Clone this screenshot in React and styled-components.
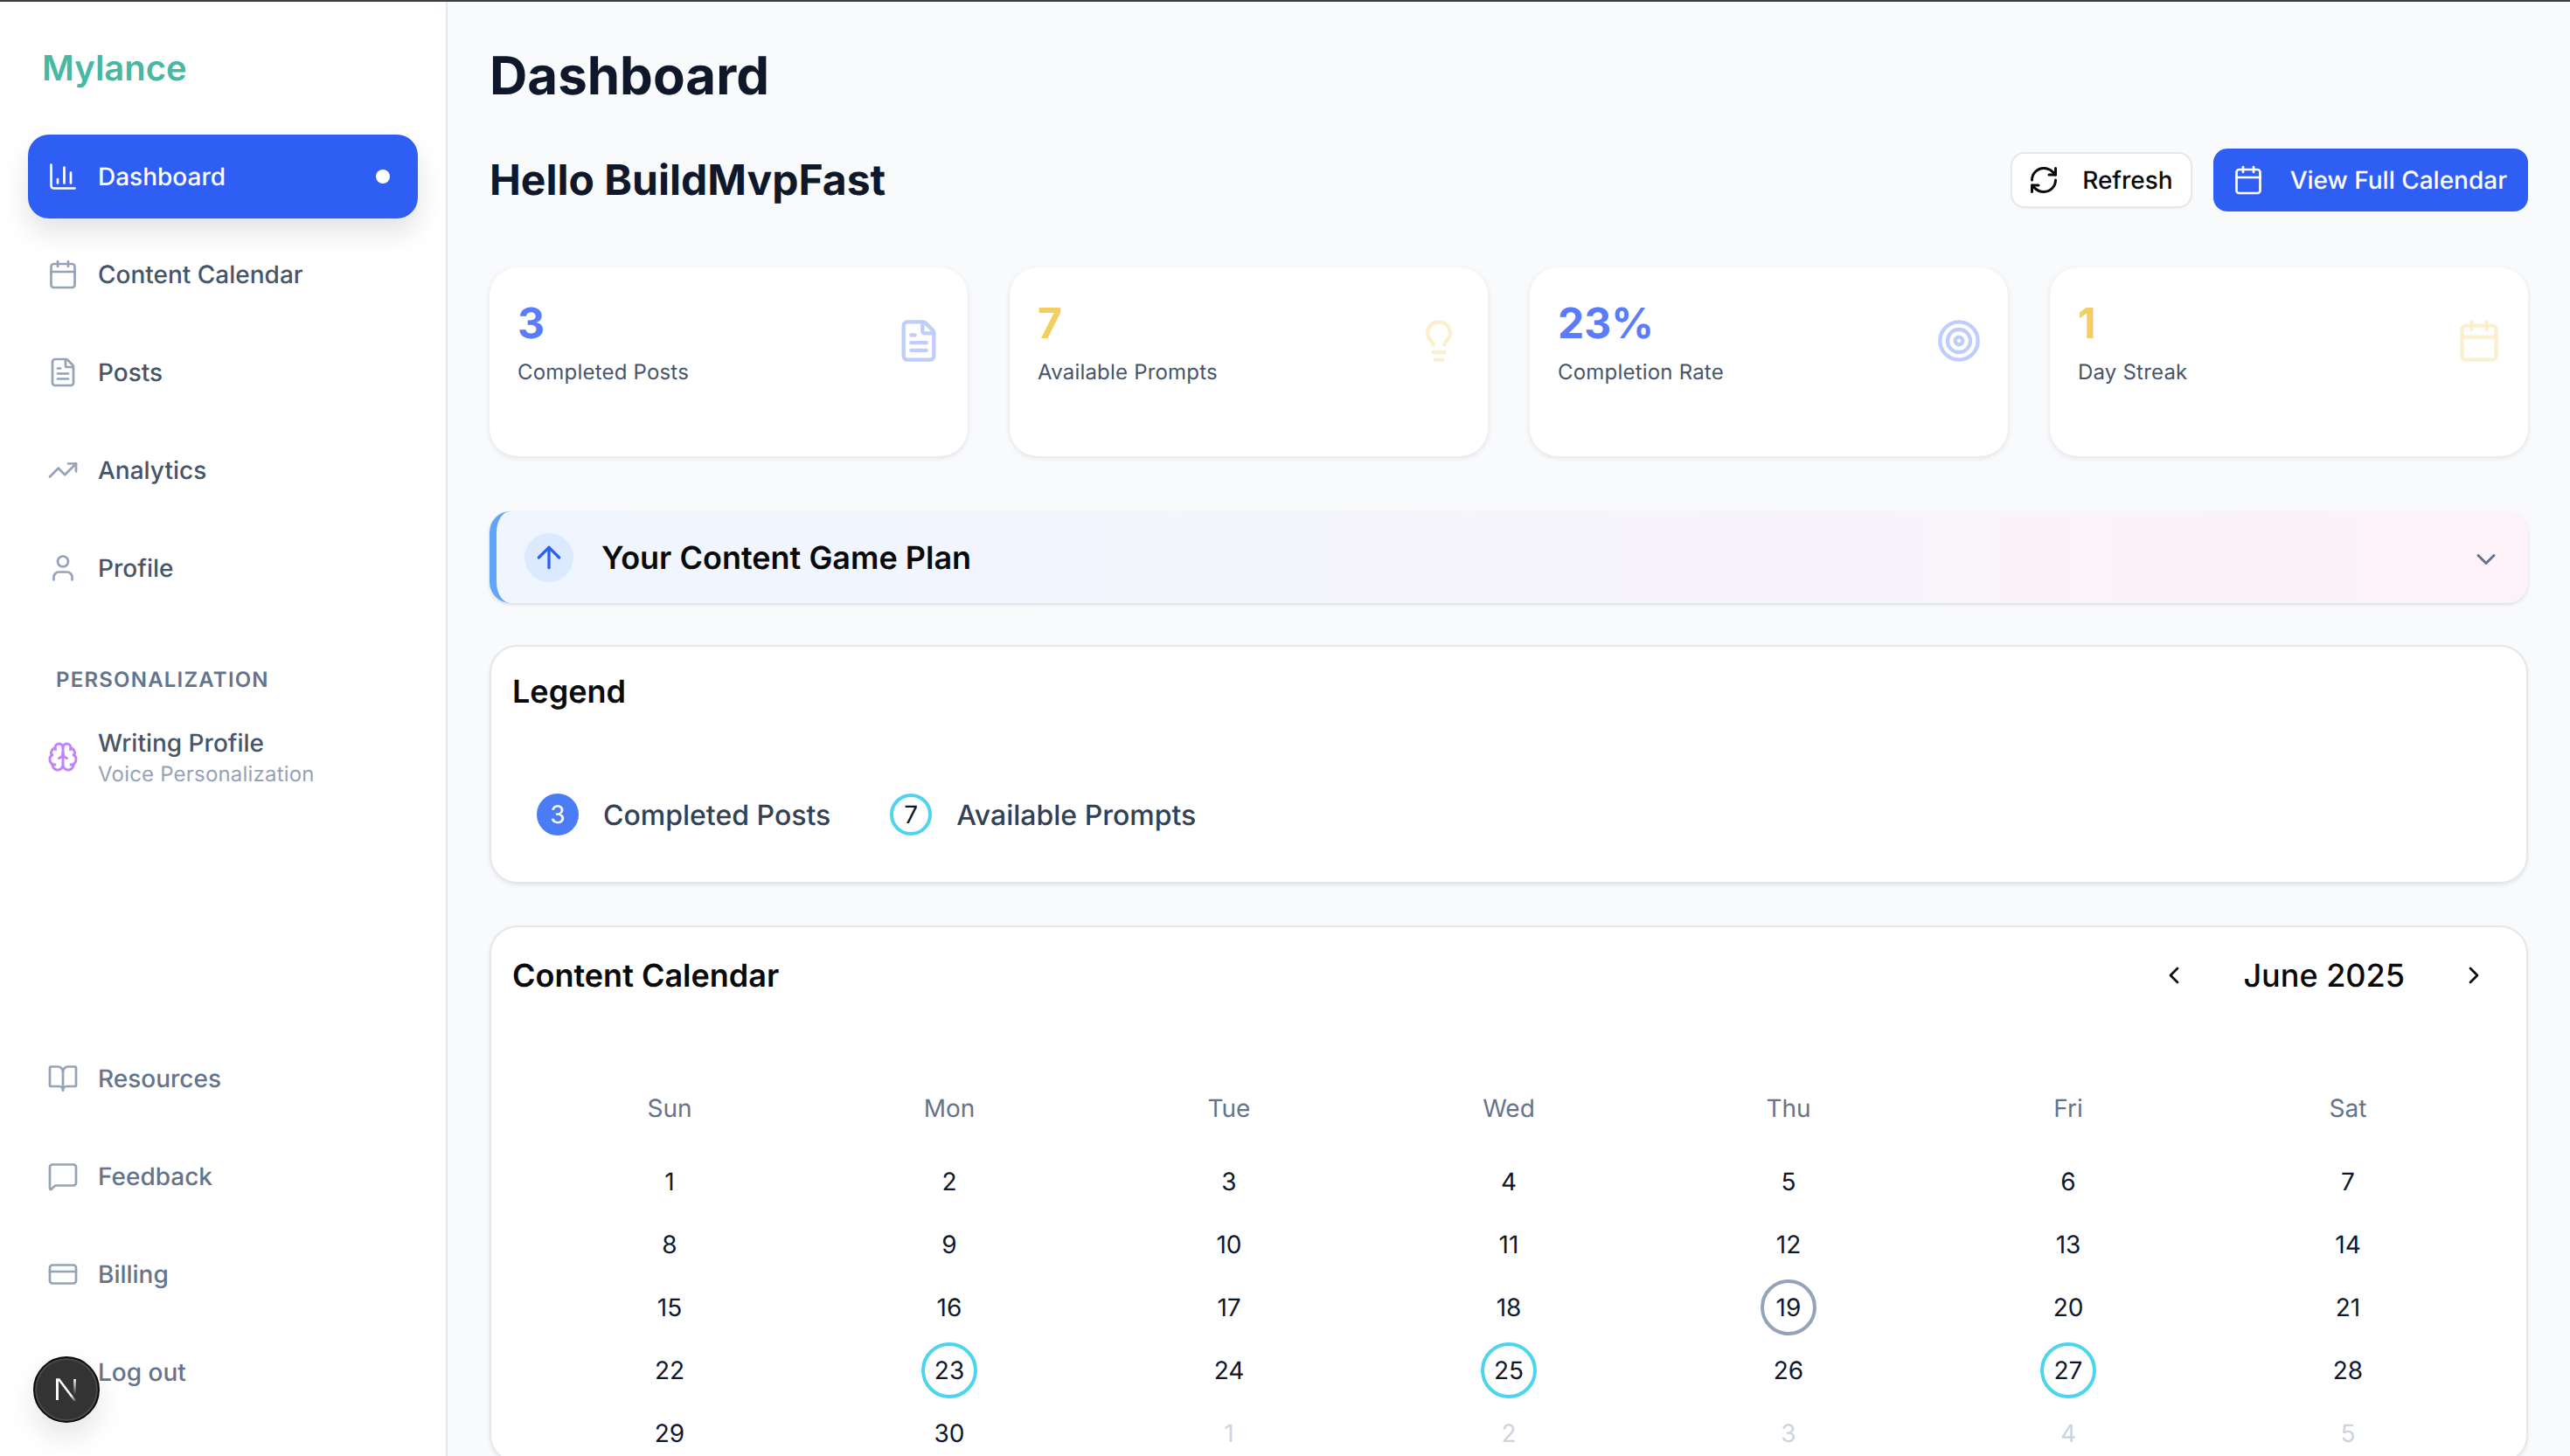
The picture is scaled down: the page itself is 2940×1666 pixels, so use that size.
import React from "react";
import styled, { createGlobalStyle } from "styled-components";
import {
  ArrowUp,
  BookOpen,
  Brain,
  Calendar,
  ChartColumn,
  ChevronDown,
  ChevronLeft,
  ChevronRight,
  CreditCard,
  FileText,
  Lightbulb,
  LogOut,
  MessageSquare,
  RefreshCw,
  Target,
  TrendingUp,
  User,
} from "lucide-react";

const GlobalStyle = createGlobalStyle`
  html, body {
    margin: 0;
    padding: 0;
    height: 100%;
    overflow: hidden;
    background: #f8fafc;
    font-family: Inter, "Liberation Sans", sans-serif;
    text-rendering: geometricPrecision;
  }
  * { box-sizing: border-box; }
`;

const Page = styled.div`
  display: flex;
  width: 100%;
  height: 100vh;
  overflow: hidden;
  border-top: 2px solid #3b3e46;
`;

const Sidebar = styled.aside`
  display: flex;
  flex-direction: column;
  justify-content: space-between;
  flex: 0 0 512px;
  height: 100%;
  padding: 0 32px 48px;
  background: #fff;
  border-right: 2px solid #e2e8f0;
`;

const Logo = styled.div`
  height: 152px;
  padding: 52px 0 0 16px;
  font-size: 40px;
  line-height: 48px;
  font-weight: 600;
  color: #47b8a4;
`;

const NavList = styled.nav`
  display: flex;
  flex-direction: column;
  gap: 16px;
`;

const NavItem = styled.div`
  display: flex;
  align-items: center;
  gap: 22px;
  height: 96px;
  padding: 0 32px 0 22px;
  border-radius: 24px;
  font-size: 28px;
  font-weight: 500;
  color: ${(p) => (p.$muted ? "#64748b" : "#475569")};
  background: ${(p) => (p.$active ? "#2f5ef5" : "transparent")};
  box-shadow: ${(p) => (p.$active ? "0 16px 30px rgba(15, 23, 42, 0.12)" : "none")};
  ${(p) => p.$active && "color: #fff;"}
  svg {
    flex: none;
    color: ${(p) => (p.$active ? "#fff" : p.$iconColor || "#94a3b8")};
  }
`;

const ActiveDot = styled.span`
  width: 16px;
  height: 16px;
  margin-left: auto;
  border-radius: 50%;
  background: #fff;
`;

const SectionLabel = styled.div`
  margin: 64px 0 24px 32px;
  font-size: 24px;
  line-height: 32px;
  font-weight: 600;
  letter-spacing: 1.2px;
  color: #64748b;
`;

const ItemText = styled.div`
  display: flex;
  flex-direction: column;
  gap: 2px;
  margin-top: 2px;
`;

const ItemTitle = styled.span`
  line-height: 36px;
`;

const ItemSub = styled.span`
  font-size: 24px;
  line-height: 32px;
  font-weight: 400;
  letter-spacing: 0.2px;
  color: #94a3b8;
`;

const Main = styled.main`
  flex: 1;
  min-width: 0;
  padding: 49px 48px 0;
`;

const PageTitle = styled.h1`
  margin: 0 0 47px;
  font-size: 60px;
  line-height: 72px;
  font-weight: 700;
  color: #0f172a;
`;

const HeaderRow = styled.div`
  display: flex;
  align-items: center;
  justify-content: space-between;
  margin-bottom: 64px;
`;

const Greeting = styled.h2`
  margin: 0;
  font-size: 48px;
  line-height: 60px;
  font-weight: 700;
  color: #0f172a;
`;

const Actions = styled.div`
  display: flex;
  align-items: center;
  gap: 24px;
`;

const Button = styled.button`
  display: flex;
  align-items: center;
  gap: ${(p) => (p.$primary ? "30px" : "26px")};
  height: ${(p) => (p.$primary ? "72px" : "64px")};
  padding: ${(p) => (p.$primary ? "0 24px 0 22px" : "0 20px 0 18px")};
  border: ${(p) => (p.$primary ? "none" : "2px solid #e5e7eb")};
  border-radius: 16px;
  font-family: inherit;
  font-size: 28px;
  font-weight: 500;
  text-rendering: geometricPrecision;
  color: ${(p) => (p.$primary ? "#fff" : "#0a0a0a")};
  background: ${(p) => (p.$primary ? "#2f5ef5" : "#fff")};
  box-shadow: ${(p) => (p.$primary ? "none" : "0 1px 2px rgba(15, 23, 42, 0.06)")};
`;

const StatGrid = styled.div`
  display: grid;
  grid-template-columns: repeat(4, 1fr);
  gap: 48px;
  margin-bottom: 63px;
`;

const StatCard = styled.div`
  position: relative;
  display: flex;
  justify-content: space-between;
  height: 216px;
  padding: 34px 30px 0 32px;
  border-radius: 32px;
  background: #fff;
  box-shadow: 0 2px 6px rgba(15, 23, 42, 0.1);
`;

const StatValue = styled.div`
  font-size: 48px;
  line-height: 60px;
  font-weight: 700;
  color: ${(p) => p.$color};
`;

const StatLabel = styled.div`
  margin-top: 10px;
  font-size: 24px;
  line-height: 32px;
  letter-spacing: 0.2px;
  color: #475569;
`;

const StatIcon = styled.div`
  display: flex;
  align-items: center;
  height: 100px;
  color: ${(p) => p.$color};
  opacity: 0.3;
`;

const PlanBar = styled.div`
  display: flex;
  align-items: center;
  gap: 32px;
  height: 105px;
  margin-bottom: 48px;
  padding: 0 30px 0 32px;
  border-left: 8px solid #60a5fa;
  border-radius: 24px;
  background: linear-gradient(90deg, #eff6ff, #fdf2f8);
  box-shadow: 0 2px 4px rgba(15, 23, 42, 0.12);
  > svg {
    margin-top: 4px;
  }
`;

const PlanBadge = styled.div`
  display: flex;
  align-items: center;
  justify-content: center;
  width: 56px;
  height: 56px;
  border-radius: 50%;
  color: #2f5ef5;
  background: #dbeafe;
`;

const PlanTitle = styled.div`
  flex: 1;
  font-size: 36px;
  font-weight: 600;
  color: #0a0a0a;
`;

const Panel = styled.section`
  margin-bottom: 48px;
  padding: 0 24px;
  border: 2px solid #e5e7eb;
  border-radius: 32px;
  background: #fff;
  box-shadow: 0 2px 4px rgba(15, 23, 42, 0.08);
`;

const PanelTitle = styled.h3`
  margin: 0;
  font-size: 36px;
  line-height: 44px;
  font-weight: 600;
  color: #0a0a0a;
`;

const LegendBody = styled.div`
  display: flex;
  flex-direction: column;
  height: 269px;
  padding-top: 29px;
`;

const LegendRow = styled.div`
  display: flex;
  align-items: center;
  gap: 68px;
  margin: 95px 0 0 28px;
`;

const LegendItem = styled.div`
  display: flex;
  align-items: center;
  gap: 28px;
  font-size: 32px;
  font-weight: 500;
  color: #334155;
`;

const LegendDot = styled.span`
  display: flex;
  align-items: center;
  justify-content: center;
  width: 48px;
  height: 48px;
  border-radius: 50%;
  font-size: 28px;
  font-weight: 400;
  color: ${(p) => (p.$filled ? "#fff" : "#0f172a")};
  background: ${(p) => (p.$filled ? "#4a7df5" : "#fff")};
  border: ${(p) => (p.$filled ? "none" : "4px solid #4dd4ee")};
`;

const CalendarHeader = styled.div`
  display: flex;
  align-items: center;
  justify-content: space-between;
  padding: 33px 0 0;
`;

const MonthNav = styled.div`
  display: flex;
  align-items: center;
  gap: 63px;
  margin-right: 20px;
  font-size: 36px;
  font-weight: 500;
  color: #0a0a0a;
`;

const WeekGrid = styled.div`
  display: grid;
  grid-template-columns: repeat(7, 1fr);
  row-gap: 8px;
  margin: 0 20px;
  padding-top: ${(p) => p.$top || 0}px;
  justify-items: center;
`;

const WeekDay = styled.div`
  font-size: 28px;
  line-height: 36px;
  font-weight: 400;
  color: #64748b;
`;

const Day = styled.div`
  display: flex;
  align-items: center;
  justify-content: center;
  width: 64px;
  height: 64px;
  border-radius: 50%;
  font-size: 28px;
  font-weight: 400;
  color: ${(p) => (p.$dim ? "#cbd5e1" : "#0f172a")};
  border: ${(p) => (p.$ring ? `4px solid ${p.$ring}` : "none")};
`;

const DevBadge = styled.div`
  position: fixed;
  left: 38px;
  bottom: 38px;
  display: flex;
  align-items: center;
  justify-content: center;
  width: 76px;
  height: 76px;
  border-radius: 50%;
  background: #333;
  border: 2px solid #0a0a0a;
  box-shadow: inset 0 0 0 2px #4a4a4a, 0 16px 32px rgba(0, 0, 0, 0.1);
`;

const topNav = [
  { label: "Dashboard", icon: ChartColumn, active: true },
  { label: "Content Calendar", icon: Calendar },
  { label: "Posts", icon: FileText },
  { label: "Analytics", icon: TrendingUp },
  { label: "Profile", icon: User },
];

const bottomNav = [
  { label: "Resources", icon: BookOpen },
  { label: "Feedback", icon: MessageSquare },
  { label: "Billing", icon: CreditCard },
  { label: "Log out", icon: LogOut },
];

const stats = [
  { value: "3", label: "Completed Posts", color: "#5b7cfa", iconColor: "#2f5ef5", icon: FileText },
  { value: "7", label: "Available Prompts", color: "#f3cf61", iconColor: "#f3cf61", icon: Lightbulb },
  { value: "23%", label: "Completion Rate", color: "#5b7cfa", iconColor: "#2f5ef5", icon: Target },
  { value: "1", label: "Day Streak", color: "#f3cf61", iconColor: "#f3cf61", icon: Calendar },
];

const weekDays = ["Sun", "Mon", "Tue", "Wed", "Thu", "Fri", "Sat"];

const rings = { 19: "#94a3b8", 23: "#4dd4ee", 25: "#4dd4ee", 27: "#4dd4ee" };

const nextDays = [1, 2, 3, 4, 5];

const NextLogo = () => (
  <svg width="36" height="36" viewBox="0 0 36 36" fill="none">
    <defs>
      <linearGradient id="nDiag" x1="14" y1="12" x2="30" y2="32" gradientUnits="userSpaceOnUse">
        <stop offset="0.6" stopColor="#fff" />
        <stop offset="1" stopColor="#fff" stopOpacity="0" />
      </linearGradient>
      <linearGradient id="nSide" x1="27" y1="6" x2="27" y2="24" gradientUnits="userSpaceOnUse">
        <stop stopColor="#fff" />
        <stop offset="1" stopColor="#fff" stopOpacity="0" />
      </linearGradient>
    </defs>
    <path d="M7.5 30V6.5h2L28 31" stroke="url(#nDiag)" strokeWidth="2.6" />
    <path d="M7.5 6v24" stroke="#fff" strokeWidth="2.6" />
    <path d="M27.5 6v18" stroke="url(#nSide)" strokeWidth="2.6" />
  </svg>
);

const App = () => (
  <Page>
    <GlobalStyle />
    <Sidebar>
      <div>
        <Logo>Mylance</Logo>
        <NavList>
          {topNav.map((item) => (
            <NavItem key={item.label} $active={item.active}>
              <item.icon size={36} strokeWidth={1.8} />
              {item.label}
              {item.active && <ActiveDot />}
            </NavItem>
          ))}
        </NavList>
        <SectionLabel>PERSONALIZATION</SectionLabel>
        <NavItem $iconColor="#c084fc">
          <Brain size={36} />
          <ItemText>
            <ItemTitle>Writing Profile</ItemTitle>
            <ItemSub>Voice Personalization</ItemSub>
          </ItemText>
        </NavItem>
      </div>
      <NavList>
        {bottomNav.map((item) => (
          <NavItem key={item.label} $muted>
            <item.icon size={36} strokeWidth={1.8} />
            {item.label}
          </NavItem>
        ))}
      </NavList>
    </Sidebar>

    <Main>
      <PageTitle>Dashboard</PageTitle>
      <HeaderRow>
        <Greeting>Hello BuildMvpFast</Greeting>
        <Actions>
          <Button>
            <RefreshCw size={36} />
            Refresh
          </Button>
          <Button $primary>
            <Calendar size={36} strokeWidth={1.8} />
            View Full Calendar
          </Button>
        </Actions>
      </HeaderRow>

      <StatGrid>
        {stats.map((s) => (
          <StatCard key={s.label}>
            <div>
              <StatValue $color={s.color}>{s.value}</StatValue>
              <StatLabel>{s.label}</StatLabel>
            </div>
            <StatIcon $color={s.iconColor}>
              <s.icon size={52} />
            </StatIcon>
          </StatCard>
        ))}
      </StatGrid>

      <PlanBar>
        <PlanBadge>
          <ArrowUp size={40} />
        </PlanBadge>
        <PlanTitle>Your Content Game Plan</PlanTitle>
        <ChevronDown size={36} color="#64748b" />
      </PlanBar>

      <Panel>
        <LegendBody>
          <PanelTitle>Legend</PanelTitle>
          <LegendRow>
            <LegendItem>
              <LegendDot $filled>3</LegendDot>
              Completed Posts
            </LegendItem>
            <LegendItem>
              <LegendDot>7</LegendDot>
              Available Prompts
            </LegendItem>
          </LegendRow>
        </LegendBody>
      </Panel>

      <Panel>
        <CalendarHeader>
          <PanelTitle>Content Calendar</PanelTitle>
          <MonthNav>
            <ChevronLeft size={32} color="#0a0a0a" />
            June 2025
            <ChevronRight size={32} color="#0a0a0a" />
          </MonthNav>
        </CalendarHeader>
        <WeekGrid $top={112}>
          {weekDays.map((d) => (
            <WeekDay key={d}>{d}</WeekDay>
          ))}
        </WeekGrid>
        <WeekGrid $top={34}>
          {Array.from({ length: 30 }, (_, i) => i + 1).map((d) => (
            <Day key={d} $ring={rings[d]}>
              {d}
            </Day>
          ))}
          {nextDays.map((d) => (
            <Day key={`next-${d}`} $dim>
              {d}
            </Day>
          ))}
        </WeekGrid>
      </Panel>
    </Main>

    <DevBadge>
      <NextLogo />
    </DevBadge>
  </Page>
);

export default App;
